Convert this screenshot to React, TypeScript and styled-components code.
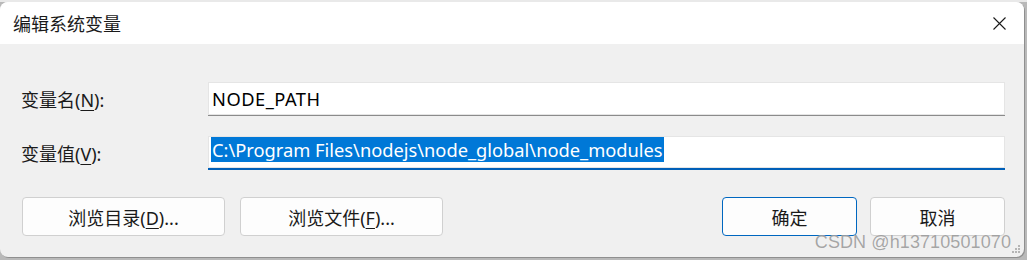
import styled, { createGlobalStyle } from 'styled-components';

const GlobalStyle = createGlobalStyle`
    html, body {
        margin: 0;
        padding: 0;
        width: 1027px;
        height: 260px;
        overflow: hidden;
        background: #b9b9b9;
        font-family: "Noto Sans", "Noto Sans CJK SC", sans-serif;
    }
    `;

const Page = styled.div`
    width: 1027px;
    height: 260px;
    padding-top: 2px;
    box-sizing: border-box;
    background: linear-gradient(#e9e9e9 0, #e9e9e9 2px, #b9b9b9 2px);
    `;

const Window = styled.div`
    position: relative;
    width: 1024px;
    height: 255px;
    background: #f0f0f0;
    border-radius: 8px;
    overflow: hidden;
    box-shadow: 1px 1px 0 #8f8f8f;
    display: flex;
    flex-direction: column;
    `;

const TitleBar = styled.div`
    height: 42px;
    background: #ffffff;
    display: flex;
    align-items: center;
    justify-content: space-between;
    padding-left: 13px;
    `;

const Title = styled.span`
    font-size: 18px;
    color: #1a1a1a;
    `;

const Close = styled.button`
    width: 24px;
    height: 24px;
    margin-right: 13px;
    padding: 0;
    border: none;
    background: transparent;
    display: flex;
    align-items: center;
    justify-content: center;
    `;

const Body = styled.div`
    padding: 38px 19px 0 21px;
    `;

const Form = styled.div`
    display: grid;
    grid-template-columns: 187px 1fr;
    row-gap: 20px;
    align-items: center;
    `;

const Label = styled.label`
    font-size: 18px;
    color: #1a1a1a;
    u {
        text-decoration-thickness: 1px;
        text-underline-offset: 3px;
    }
    `;

const Field = styled.div<{ $focused?: boolean }>`
    height: 34px;
    box-sizing: border-box;
    background: #ffffff;
    border-bottom: ${p => p.$focused ? '2px solid #005fb8' : '1px solid #8b8b8b'};
    box-shadow: inset 0 0 0 1px #e5e5e5;
    padding-left: 4px;
    padding-top: ${p => p.$focused ? '1px' : '0'};
    display: flex;
    align-items: ${p => p.$focused ? 'flex-start' : 'center'};
    font-size: 18.3px;
    letter-spacing: ${p => p.$focused ? '0' : '0.5px'};
    color: #000;
    white-space: nowrap;
    `;

const Selected = styled.span`
    background: #0078d7;
    color: #ffffff;
    line-height: 25px;
    margin-left: -1px;
    padding: 0 1px;
    `;

const ButtonRow = styled.div`
    margin-top: 27px;
    padding-left: 1px;
    display: flex;
    justify-content: space-between;
    `;

const Group = styled.div<{ $gap: number }>`
    display: flex;
    gap: ${p => p.$gap}px;
    `;

const Button = styled.button<{ $w: number; $primary?: boolean }>`
    width: ${p => p.$w}px;
    height: 39px;
    box-sizing: border-box;
    background: #fdfdfd;
    border: 1px solid ${p => p.$primary ? '#0067c0' : '#d0d0d0'};
    border-radius: 4px;
    font-family: "Noto Sans", "Noto Sans CJK SC", sans-serif;
    font-size: 18px;
    color: #1a1a1a;
    padding: 0;
    u {
        text-decoration-thickness: 1px;
        text-underline-offset: 3px;
    }
    `;

const Watermark = styled.div`
    position: absolute;
    right: 13px;
    bottom: 4px;
    font-family: "Liberation Sans", Arial, sans-serif;
    font-size: 18px;
    color: rgba(150, 150, 150, 0.85);
    text-shadow: 0 0 1px rgba(255, 255, 255, 0.6);
    letter-spacing: 0.1px;
    `;

const Grip = styled.svg`
    position: absolute;
    right: 3px;
    bottom: 3px;
    `;

export default function App() {
    return (
        <>
            <GlobalStyle />
            <Page>
                <Window>
                    <TitleBar>
                        <Title>编辑系统变量</Title>
                        <Close>
                            <svg width="13" height="13" viewBox="0 0 13 13">
                                <path d="M0.5 0.5 L12.5 12.5 M12.5 0.5 L0.5 12.5" stroke="#1a1a1a" strokeWidth="1.1" fill="none" />
                            </svg>
                        </Close>
                    </TitleBar>
                    <Body>
                        <Form>
                            <Label>变量名(<u>N</u>):</Label>
                            <Field>NODE_PATH</Field>
                            <Label>变量值(<u>V</u>):</Label>
                            <Field $focused>
                                <Selected>C:\Program Files\nodejs\node_global\node_modules</Selected>
                            </Field>
                        </Form>
                        <ButtonRow>
                            <Group $gap={15}>
                                <Button $w={203}>浏览目录(<u>D</u>)...</Button>
                                <Button $w={203}>浏览文件(<u>F</u>)...</Button>
                            </Group>
                            <Group $gap={13}>
                                <Button $w={135} $primary>确定</Button>
                                <Button $w={135}>取消</Button>
                            </Group>
                        </ButtonRow>
                    </Body>
                    <Watermark>CSDN @h13710501070</Watermark>
                    <Grip width="10" height="10" viewBox="0 0 10 10">
                        <rect x="7" y="1" width="2" height="2" fill="#b5b5b5" />
                        <rect x="4" y="4" width="2" height="2" fill="#b5b5b5" />
                        <rect x="7" y="4" width="2" height="2" fill="#b5b5b5" />
                        <rect x="1" y="7" width="2" height="2" fill="#b5b5b5" />
                        <rect x="4" y="7" width="2" height="2" fill="#b5b5b5" />
                        <rect x="7" y="7" width="2" height="2" fill="#b5b5b5" />
                    </Grip>
                </Window>
            </Page>
        </>
    );
}
